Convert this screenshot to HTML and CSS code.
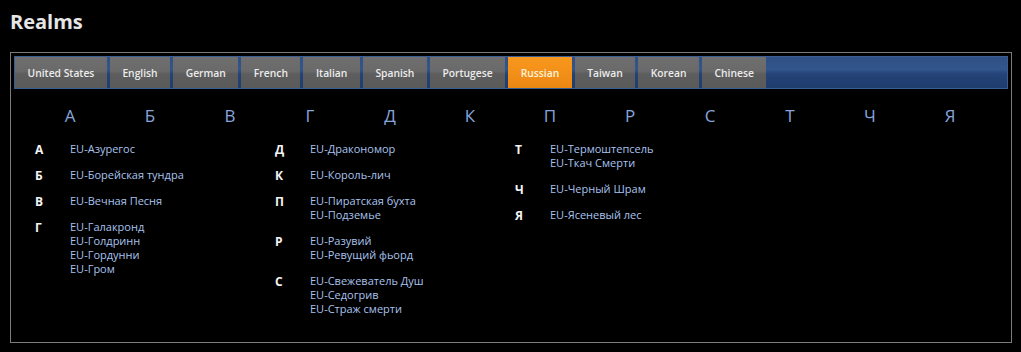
FILE: index.html
```html
<!DOCTYPE html>
<html lang="ru">
<head>
    <meta charset="UTF-8">
    <title>Realms</title>
    <link rel="stylesheet" href="styles.css">
</head>
<body>
    <h1 class="page-title">Realms</h1>

    <div class="realm-frame">
        <ul class="region-tabs">
            <li class="region-tab">United States</li>
            <li class="region-tab">English</li>
            <li class="region-tab">German</li>
            <li class="region-tab">French</li>
            <li class="region-tab">Italian</li>
            <li class="region-tab">Spanish</li>
            <li class="region-tab">Portugese</li>
            <li class="region-tab active">Russian</li>
            <li class="region-tab">Taiwan</li>
            <li class="region-tab">Korean</li>
            <li class="region-tab">Chinese</li>
        </ul>

        <div class="letter-index">
            <a>А</a><a>Б</a><a>В</a><a>Г</a><a>Д</a><a>К</a>
            <a>П</a><a>Р</a><a>С</a><a>Т</a><a>Ч</a><a>Я</a>
        </div>

        <div class="realm-columns">
            <div class="realm-column">
                <div class="realm-group">
                    <span class="group-letter">А</span>
                    <ul class="realm-list"><li>EU-Азурегос</li></ul>
                </div>
                <div class="realm-group">
                    <span class="group-letter">Б</span>
                    <ul class="realm-list"><li>EU-Борейская тундра</li></ul>
                </div>
                <div class="realm-group">
                    <span class="group-letter">В</span>
                    <ul class="realm-list"><li>EU-Вечная Песня</li></ul>
                </div>
                <div class="realm-group">
                    <span class="group-letter">Г</span>
                    <ul class="realm-list">
                        <li>EU-Галакронд</li>
                        <li>EU-Голдринн</li>
                        <li>EU-Гордунни</li>
                        <li>EU-Гром</li>
                    </ul>
                </div>
            </div>

            <div class="realm-column">
                <div class="realm-group">
                    <span class="group-letter">Д</span>
                    <ul class="realm-list"><li>EU-Дракономор</li></ul>
                </div>
                <div class="realm-group">
                    <span class="group-letter">К</span>
                    <ul class="realm-list"><li>EU-Король-лич</li></ul>
                </div>
                <div class="realm-group">
                    <span class="group-letter">П</span>
                    <ul class="realm-list">
                        <li>EU-Пиратская бухта</li>
                        <li>EU-Подземье</li>
                    </ul>
                </div>
                <div class="realm-group">
                    <span class="group-letter">Р</span>
                    <ul class="realm-list">
                        <li>EU-Разувий</li>
                        <li>EU-Ревущий фьорд</li>
                    </ul>
                </div>
                <div class="realm-group">
                    <span class="group-letter">С</span>
                    <ul class="realm-list">
                        <li>EU-Свежеватель Душ</li>
                        <li>EU-Седогрив</li>
                        <li>EU-Страж смерти</li>
                    </ul>
                </div>
            </div>

            <div class="realm-column">
                <div class="realm-group">
                    <span class="group-letter">Т</span>
                    <ul class="realm-list">
                        <li>EU-Термоштепсель</li>
                        <li>EU-Ткач Смерти</li>
                    </ul>
                </div>
                <div class="realm-group">
                    <span class="group-letter">Ч</span>
                    <ul class="realm-list"><li>EU-Черный Шрам</li></ul>
                </div>
                <div class="realm-group">
                    <span class="group-letter">Я</span>
                    <ul class="realm-list"><li>EU-Ясеневый лес</li></ul>
                </div>
            </div>
        </div>
    </div>
</body>
</html>
```

FILE: styles.css
```css
:root {
    --frame-border: #7c7c7c;
    --tab-active: #f39019;
    --index-color: #86a6dc;
    --link-color: #a9c3ee;
}

* {
    margin: 0;
    padding: 0;
    box-sizing: border-box;
}

body {
    font-family: "Open Sans", "Noto Sans", sans-serif;
    background-color: #000;
    color: #fff;
    width: 1021px;
    height: 352px;
    overflow: hidden;
}

.page-title {
    font-size: 20px;
    font-weight: 700;
    color: #e6e6e6;
    padding: 8px 0 0 10px;
    height: 52px;
    line-height: 28px;
}

.realm-frame {
    margin: 0 9px 0 10px;
    height: 291px;
    border: 1px solid var(--frame-border);
    padding: 3px;
}

.region-tabs {
    list-style: none;
    display: flex;
    gap: 3px;
    height: 33px;
    padding: 1px 2px 1px 1px;
    background: linear-gradient(to bottom, #2e4f84 0%, #33568c 40%, #244377 55%, #1f3c6c 100%);
    box-shadow: inset 0 0 0 1px #3a5d94;
}

.region-tab {
    display: flex;
    align-items: center;
    justify-content: center;
    padding: 0 12.5px;
    font-size: 10.3px;
    font-weight: 600;
    color: #ececec;
    background: linear-gradient(to bottom, #6e6e6e 0%, #6a6a6a 45%, #5d5d5d 55%, #5a5a5a 100%);
    cursor: pointer;
}

.region-tab.active {
    background: linear-gradient(to bottom, #f7961c 0%, #f39019 50%, #ea8612 100%);
    color: #fff3dc;
}

.letter-index {
    display: grid;
    grid-template-columns: repeat(12, 80px);
    padding-left: 16px;
    margin-top: 16px;
    height: 22px;
}

.letter-index a {
    text-align: center;
    font-size: 17px;
    line-height: 22px;
    color: var(--index-color);
    cursor: pointer;
}

.realm-columns {
    display: flex;
    padding-left: 21px;
    margin-top: 15px;
}

.realm-column {
    width: 240px;
    display: flex;
    flex-direction: column;
    gap: 12px;
}

.realm-group {
    display: flex;
}

.group-letter {
    width: 35px;
    font-size: 12px;
    font-weight: 700;
    line-height: 14px;
    color: #f4f4f4;
    position: relative;
    top: 1px;
}

.realm-list {
    list-style: none;
    font-size: 11px;
    line-height: 14px;
    color: var(--link-color);
}
```
